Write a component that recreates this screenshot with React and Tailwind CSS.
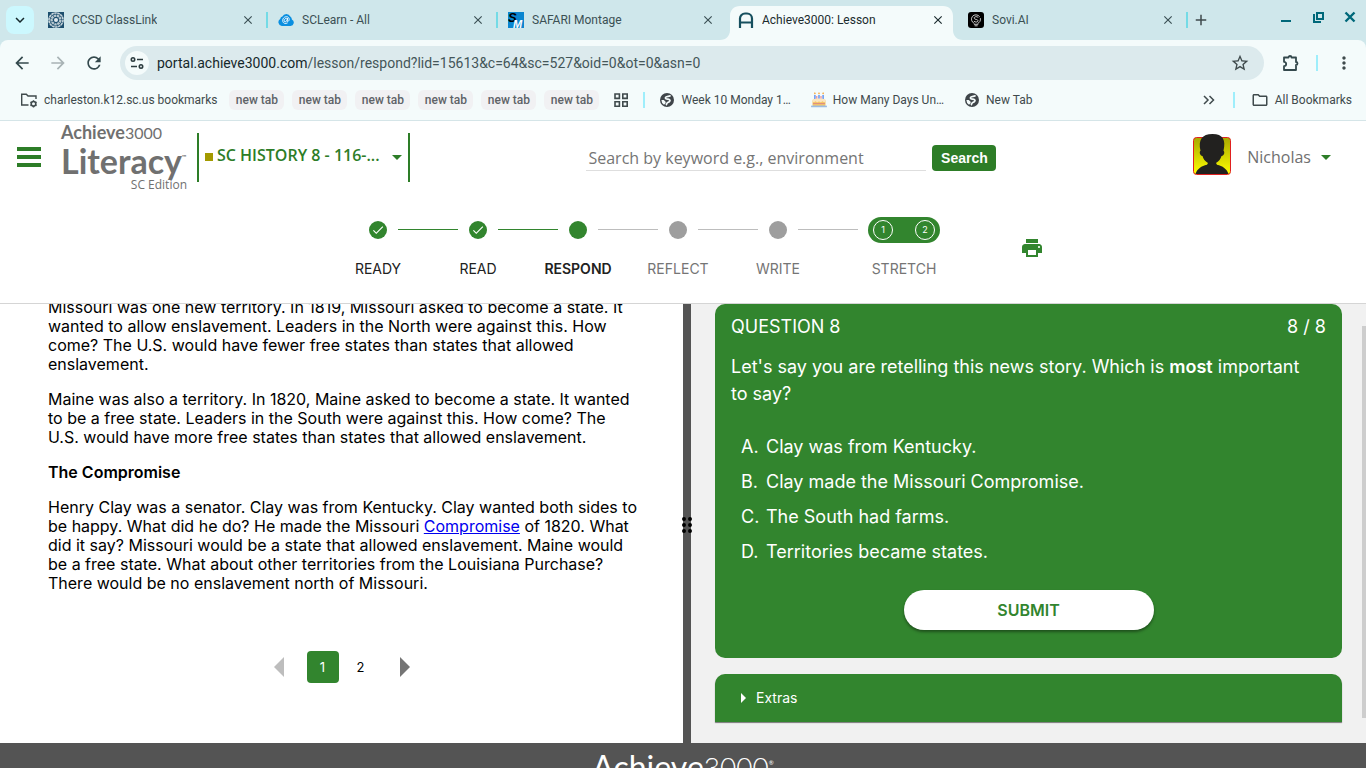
import { MdAdd, MdArrowBack, MdArrowForward, MdCheck, MdClose, MdExpandMore, MdMoreVert, MdOutlineFolder, MdPrint, MdRefresh, MdStarBorder } from 'react-icons/md';

const tabs = [
  { title: 'CCSD ClassLink', icon: <ClassLinkIcon />, divider: true },
  { title: 'SCLearn - All', icon: <CloudIcon />, divider: true },
  { title: 'SAFARI Montage', icon: <SafariIcon /> },
  { title: 'Achieve3000: Lesson', icon: <AchieveIcon />, active: true },
  { title: 'Sovi.AI', icon: <SoviIcon />, divider: true },
];

const steps = [
  { label: 'READY', state: 'done' },
  { label: 'READ', state: 'done' },
  { label: 'RESPOND', state: 'current' },
  { label: 'REFLECT', state: 'todo' },
  { label: 'WRITE', state: 'todo' },
];

const answers = [
  { letter: 'A', text: 'Clay was from Kentucky.' },
  { letter: 'B', text: 'Clay made the Missouri Compromise.' },
  { letter: 'C', text: 'The South had farms.' },
  { letter: 'D', text: 'Territories became states.' },
];

function ClassLinkIcon() {
  return (
    <svg className="h-4 w-4" viewBox="0 0 16 16" fill="none">
      <rect width="16" height="16" fill="#1d4f6e" />
      <circle cx="8" cy="8" r="7" stroke="#c9d6dc" strokeWidth="1.600" strokeDasharray="2.600 0.500" />
      <circle cx="8" cy="8" r="4.400" stroke="#b9c9d0" strokeWidth="2.400" strokeDasharray="2.400 0.600" />
      <circle cx="8" cy="8" r="2" fill="#dfe8ec" />
    </svg>
  );
}

function CloudIcon() {
  return (
    <svg className="h-4 w-4" viewBox="0 0 16 16" fill="none">
      <path d="M3.800 14A3.800 3.800 0 0 1 2.200 7a3 3 0 0 1 2.200-2.400A4.300 4.300 0 0 1 12.300 4.600a3.500 3.500 0 0 1 1.600 2.800A3.500 3.500 0 0 1 12.500 14z" fill="#0a8fe0" />
      <path d="M9.600 6.500c-1.800-.8-3.600.6-3.500 2.300.1 1.400 2.200 1 2.800-.3l.7-2-.6 2.600c.2 1 2.300.1 2.200-1.900C11 4.700 8.300 4 6.300 5.400 4 7 4.200 10.500 6.500 11.300c1 .3 2 .1 2.800-.3" stroke="#fff" strokeWidth="0.900" strokeLinecap="round" />
    </svg>
  );
}

function SafariIcon() {
  return (
    <svg className="h-4 w-4" viewBox="0 0 16 16">
      <rect width="16" height="16" fill="#0b86d0" />
      <text x="0" y="10" fontSize="13" fontWeight="900" fontStyle="italic" fontFamily="Liberation Sans, sans-serif" fill="#000">S</text>
      <text x="5" y="15.500" fontSize="11" fontWeight="700" fontStyle="italic" fontFamily="Liberation Sans, sans-serif" fill="#fff">M</text>
    </svg>
  );
}

function AchieveIcon() {
  return (
    <svg className="h-4 w-4" viewBox="0 0 16 16" fill="none" stroke="#17505f" strokeWidth="2.200">
      <path d="M2 16V6.500A5 5 0 0 1 7 1.500h2a5 5 0 0 1 5 5V16M2 10.500h12" />
    </svg>
  );
}

function SoviIcon() {
  return (
    <svg className="h-4 w-4" viewBox="0 0 16 16" fill="none">
      <rect width="16" height="16" rx="3" fill="#000" />
      <path d="M11.500 4.500A4.500 4.500 0 1 0 6 11.300M10 5.200C8 3.800 5.700 5 6.300 6.500c.5 1.200 3.500.6 3.700 2.200.1 1.500-2.600 1.800-3.800.8M12.400 6.500c.4 2.300-.7 4-2.400 4.800M6.300 12.300h3.600M7 13.800h2.200" stroke="#ddd" strokeWidth="0.900" strokeLinecap="round" />
    </svg>
  );
}

function GlobeIcon() {
  return (
    <svg className="h-4 w-4" viewBox="0 0 16 16" fill="none">
      <circle cx="8" cy="8" r="7" fill="#3f4549" />
      <path d="M11.500 3.300c-.7 1.400-4.500.6-5 2.300-.4 1.700 2.700 1.200 4 2 1.300 1-.2 2.500-1.500 2.700-1.500.3-1 1.800-2 2.800" stroke="#f4fbfb" strokeWidth="1.700" />
      <path d="M2.400 8h2.400l1.800 1.800v1.400L5 12.800A5.600 5.600 0 0 1 2.400 8z" fill="#f4fbfb" />
    </svg>
  );
}

function CakeIcon() {
  return (
    <svg className="h-4 w-4" viewBox="0 0 16 16">
      <path d="M3.200 3h1.400v5H3.200zM7.300 3h1.400v5H7.300zM11.400 3h1.400v5h-1.400z" fill="#5b8def" />
      <path d="M5.300 4h1v4h-1zM9.500 4h1v4h-1z" fill="#e9777c" />
      <path d="M3.900 0l.8 1.600-.8 1-.8-1zM8 0l.8 1.600-.8 1-.8-1zM12.100 0l.8 1.600-.8 1-.8-1z" fill="#f79b1e" />
      <rect x="1.500" y="7.200" width="13" height="7" rx="1.500" fill="#f5c667" />
      <path d="M1.500 9.300V8c0-2 13-2 13 0v1.300c-1.200 1.300-2 .9-3.200 0-1.200 1.300-2.100 1.200-3.300 0-1.200 1.200-2.100 1.300-3.300 0-1.200.9-2 1.300-3.200 0z" fill="#fbe6c0" />
      <path d="M2 11.600h12" stroke="#de8b83" strokeWidth="1" />
      <rect x="0" y="13.500" width="16" height="1.800" rx="0.900" fill="#9dbbe0" />
    </svg>
  );
}

function ManagedFolderIcon() {
  return (
    <svg className="h-[18px] w-[18px] shrink-0" viewBox="0 0 18 18" fill="none" stroke="#3f4a4c" strokeWidth="1.400">
      <path d="M8.500 14H1.700V3.200h4.600L8 5h8v3" />
      <circle cx="13.500" cy="12.800" r="2.300" strokeWidth="1.600" />
      <path d="M13.500 9.200v7.200M10.400 11l6.200 3.600M16.600 11l-6.200 3.600" strokeDasharray="1.300 4.600" />
    </svg>
  );
}

function Tab({ title, icon, active, divider }) {
  return (
    <div className={`relative flex h-10 w-[230px] min-w-0 items-center pr-5 pl-2.5 text-xs ${active ? 'text-[#1b2b2e]' : 'text-[#3b5054]'}`}>
      {active && (
        <svg className="absolute top-1.5 -left-2 h-[34px] w-[243px]" viewBox="0 0 243 34" fill="#f4fbfb">
          <path d="M0 34c6 0 10-4 10-10V10C10 4 14 0 20 0h203c6 0 10 4 10 10v14c0 6 4 10 10 10z" />
        </svg>
      )}
      <a href="#" className="relative flex min-w-0 flex-1 items-center gap-2">
        <span className="shrink-0">{icon}</span>
        <span className="truncate">{title}</span>
      </a>
      <button aria-label={`Close ${title}`} className="relative -mr-2 flex w-4 justify-center">
        <MdClose className="h-3.5 w-3.5" />
      </button>
      {divider && <span className="absolute right-0 h-4 w-0.5 bg-[#74dbe6]" />}
    </div>
  );
}

function BrowserChrome() {
  return (
    <div className="shrink-0 bg-[#cfe7eb] font-['Roboto',sans-serif] text-[#3f4a4c]">
      <div className="flex h-10 items-center pl-1.5">
        <button aria-label="Search tabs" className="mr-1 flex h-7 w-7 shrink-0 items-center justify-center rounded-lg bg-[#ccf8fe] text-[#16292c]">
          <MdExpandMore className="h-[18px] w-[18px]" />
        </button>
        {tabs.map((tab) => (
          <Tab key={tab.title} {...tab} />
        ))}
        <button aria-label="New tab" className="ml-1">
          <MdAdd className="h-[18px] w-[18px]" />
        </button>
        <div className="mr-2 mb-1.5 ml-auto flex items-center gap-4 text-[#00687a]">
          <button aria-label="Minimize">
            <svg className="h-4 w-4" viewBox="0 0 16 16"><path d="M3 11h10v2H3z" fill="currentColor" /></svg>
          </button>
          <button aria-label="Restore">
            <svg className="h-4 w-4" viewBox="0 0 16 16" fill="none" stroke="currentColor" strokeWidth="2">
              <path d="M7 4h6v6H7zM4 5v8h7" />
            </svg>
          </button>
          <button aria-label="Close window">
            <svg className="h-4 w-4" viewBox="0 0 16 16" fill="none" stroke="currentColor" strokeWidth="2.400"><path d="M3.500 3.500l9 9M12.500 3.500l-9 9" /></svg>
          </button>
        </div>
      </div>

      <div className="rounded-t-lg border-b border-[#d5e5e8] bg-[#f4fbfb]">
        <div className="flex h-[46px] items-center px-3">
          <button aria-label="Back" className="mr-4 text-[#34494d]"><MdArrowBack className="h-5 w-5" /></button>
          <button aria-label="Forward" className="mr-4 text-[#a8b3b5]"><MdArrowForward className="h-5 w-5" /></button>
          <button aria-label="Reload" className="mr-4 text-[#34494d]"><MdRefresh className="h-5 w-5" /></button>
          <div className="flex h-[34px] flex-1 items-center rounded-full bg-[#dceaed] pr-3.5 pl-[5px]">
            <button aria-label="Site information" className="flex h-6 w-6 items-center justify-center rounded-full bg-[#f4fbfb]">
              <svg className="h-3.5 w-3.5" viewBox="0 0 14 14" fill="none" stroke="#2b3b3e" strokeWidth="1.600">
                <circle cx="3" cy="3.500" r="1.700" />
                <path d="M7 3.500h6M1 10.500h6" />
                <circle cx="11" cy="10.500" r="1.700" />
              </svg>
            </button>
            <a href="#" className="ml-2 flex-1 text-sm text-[#445659]">
              <span className="text-[#15282b]">portal.achieve3000.com</span>/lesson/respond?lid=15613&amp;c=64&amp;sc=527&amp;oid=0&amp;ot=0&amp;asn=0
            </a>
            <button aria-label="Bookmark this page"><MdStarBorder className="h-5 w-5" /></button>
          </div>
          <button aria-label="Extensions" className="ml-4 text-[#34494d]">
            <svg className="h-5 w-5" viewBox="0 0 20 20" fill="none" stroke="currentColor" strokeWidth="1.800" strokeLinejoin="round">
              <path d="M4 4.500h4.500a1.500 1.500 0 0 1 3 0H16v4.500a1.500 1.500 0 0 1 0 3V17H4v-3.800c2.900-.2 2.900-4.200 0-4.400z" />
            </svg>
          </button>
          <span className="mx-4 h-4 w-0.5 bg-[#9eeefb]" />
          <button aria-label="Browser menu"><MdMoreVert className="h-5 w-5" /></button>
        </div>

        <div className="flex h-[34px] items-center pr-3.5 pb-1.5 pl-5 text-xs">
          <a href="#" className="flex items-center gap-1.5"><ManagedFolderIcon />charleston.k12.sc.us bookmarks</a>
          <div className="ml-3 flex gap-2">
            {[1, 2, 3, 4, 5, 6].map((n) => (
              <a key={n} href="#" className="w-[55px] rounded-md bg-[#f1f1f3] text-center leading-5 font-medium text-[#5f6368]">new tab</a>
            ))}
          </div>
          <button aria-label="Tab groups" className="ml-3.5">
            <svg className="h-4 w-4" viewBox="0 0 16 16" fill="none" stroke="currentColor" strokeWidth="1.600">
              <path d="M2 2h4.400v4.400H2zM9.800 2h4.400v4.400H9.800zM2 9.800h4.400v4.400H2zM9.800 9.800h4.400v4.400H9.800z" />
            </svg>
          </button>
          <span className="mx-3.5 h-4 w-0.5 bg-[#9eeefb]" />
          <a href="#" className="flex items-center gap-1.5"><GlobeIcon />Week 10 Monday 1…</a>
          <a href="#" className="ml-5 flex items-center gap-1.5"><CakeIcon />How Many Days Un…</a>
          <a href="#" className="ml-5 flex items-center gap-1.5"><GlobeIcon />New Tab</a>
          <button aria-label="More bookmarks" className="ml-auto">
            <svg className="h-4 w-4" viewBox="0 0 16 16" fill="none" stroke="currentColor" strokeWidth="1.500"><path d="M3 4l4 4-4 4M8.500 4l4 4-4 4" /></svg>
          </button>
          <span className="mx-4 h-4 w-0.5 bg-[#9eeefb]" />
          <a href="#" className="flex items-center gap-1.5"><MdOutlineFolder className="h-[18px] w-[18px]" />All Bookmarks</a>
        </div>
      </div>
    </div>
  );
}

function Header() {
  return (
    <header className="flex h-[72px] shrink-0 items-center pr-[35px] pl-[17px] font-['Open_Sans',sans-serif]">
      <button aria-label="Menu" className="flex w-6 flex-col gap-1">
        <span className="h-1 bg-[#2d7d27]" />
        <span className="h-1 bg-[#2d7d27]" />
        <span className="h-1 bg-[#2d7d27]" />
      </button>
      <a href="#" className="ml-5 flex w-[126px] flex-col text-[#707070]">
        <span className="font-['Lato',sans-serif] text-lg leading-4 font-bold">
          Achieve<span className="text-base font-normal">3000</span>
        </span>
        <span className="flex font-['Lato',sans-serif] text-[34px] leading-8 font-bold">
          Literacy<span className="text-[6px] leading-6">™</span>
        </span>
        <span className="text-right text-xs leading-4 font-medium">SC Edition</span>
      </a>
      <button className="ml-2.5 flex h-[49px] items-center border-x-2 border-[#2d7d27] px-1.5 font-semibold text-[#2d7d27]">
        <span className="mr-1 h-2 w-2 bg-[#a39a00]" />
        <span className="pb-1">SC HISTORY 8 - 116-...</span>
        <svg className="ml-3 h-[5px] w-2.5" viewBox="0 0 10 5" fill="currentColor"><path d="M0 0h10L5 5z" /></svg>
      </button>
      <form className="mt-0.5 mr-5 ml-auto flex items-center gap-1.5">
        <input aria-label="Search" placeholder="Search by keyword e.g., environment" className="h-[26px] w-[340px] border-b border-[#dedede] px-0.5 text-base placeholder:text-[#757575]" />
        <button type="button" className="h-[26px] w-16 rounded bg-[#2d7d27] font-['Liberation_Sans',sans-serif] text-sm font-bold text-white">Search</button>
      </form>
      <button className="ml-auto flex items-center text-[#707070]">
        <svg className="mr-4 mb-1 h-[42px] w-[38px]" viewBox="0 0 38 42">
          <defs>
            <linearGradient id="avatar" x2="0" y2="1"><stop stopColor="#a8a800" /><stop offset="1" stopColor="#ffff00" /></linearGradient>
          </defs>
          <rect x="0.500" y="3.500" width="37" height="37" rx="3" fill="url(#avatar)" stroke="#e02020" />
          <path d="M2.500 40c1.500-5 6-8 11.500-9.200l1-1.800c-3-1.800-4.800-4-5.500-7-2.600 0-3.500-4.400-2-5.200C5 6 9 0 19.500 0S33 6 30.500 16.800c1.500.8.800 5.200-2 5.200-.8 3-2.500 5.200-5.500 7l1 1.800c5.500 1.200 10 4.200 11.500 9.200z" fill="#22211f" />
        </svg>
        Nicholas
        <svg className="ml-2.5 h-[5px] w-2.5" viewBox="0 0 10 5" fill="#2d7d27"><path d="M0 0h10L5 5z" /></svg>
      </button>
    </header>
  );
}

function Step({ label, state }) {
  return (
    <li className="flex items-start">
      <a href="#" className="flex w-10 flex-col items-center pt-1">
        <span className={`flex h-[18px] w-[18px] items-center justify-center rounded-full text-white ${state === 'todo' ? 'bg-[#9e9e9e]' : 'bg-[#32852e]'}`}>
          {state === 'done' && <MdCheck className="h-3.5 w-3.5" />}
        </span>
        <span className={`mt-5 text-sm ${state === 'todo' ? 'text-[#757575]' : 'text-[#212121]'} ${state === 'current' ? 'font-semibold' : ''}`}>{label}</span>
      </a>
      <span className={`mt-3 h-px w-[60px] ${state === 'done' ? 'bg-[#32852e]' : 'bg-[#bdbdbd]'}`} />
    </li>
  );
}

function Stepper() {
  return (
    <nav className="flex h-[111px] shrink-0 items-start justify-center border-b border-[#d5d5d5] pt-6 pl-9 font-['Inter',sans-serif]">
      <ol className="flex items-start">
        {steps.map((step) => (
          <Step key={step.label} {...step} />
        ))}
        <li className="flex w-[92px] flex-col items-center">
          <div className="flex h-[26px] w-[72px] items-center justify-between rounded-full bg-[#32852e] px-[5px] text-[9px] text-white">
            <a href="#" className="flex h-5 w-5 items-center justify-center rounded-full border border-white">1</a>
            <a href="#" className="flex h-5 w-5 items-center justify-center rounded-full border border-white">2</a>
          </div>
          <span className="mt-4 text-sm text-[#757575]">STRETCH</span>
        </li>
      </ol>
      <button aria-label="Print" className="mt-[19px] ml-[70px] text-[#32852e]"><MdPrint className="h-6 w-6" /></button>
    </nav>
  );
}

function Article() {
  return (
    <article className="w-1/2 shrink-0 overflow-hidden px-11 leading-[19px] text-black">
      <div className="-mt-1.5 space-y-4 pl-1">
        <p>Missouri was one new territory. In 1819, Missouri asked to become a state. It wanted to allow enslavement. Leaders in the North were against this. How come? The U.S. would have fewer free states than states that allowed enslavement.</p>
        <p>Maine was also a territory. In 1820, Maine asked to become a state. It wanted to be a free state. Leaders in the South were against this. How come? The U.S. would have more free states than states that allowed enslavement.</p>
        <h2 className="font-semibold">The Compromise</h2>
        <p>Henry Clay was a senator. Clay was from Kentucky. Clay wanted both sides to be happy. What did he do? He made the Missouri <a href="#" className="text-[#0000ee] underline">Compromise</a> of 1820. What did it say? Missouri would be a state that allowed enslavement. Maine would be a free state. What about other territories from the Louisiana Purchase? There would be no enslavement north of Missouri.</p>
      </div>
      <div className="mt-[58px] flex justify-center gap-3 text-[13px]">
        <button aria-label="Previous page" className="flex h-8 w-8 items-center justify-center">
          <svg className="h-5 w-2.5" viewBox="0 0 10 20" fill="#bdbdbd"><path d="M10 0v20L0 10z" /></svg>
        </button>
        <div className="flex gap-1.5">
          <button className="h-8 w-8 rounded bg-[#32852e] text-white">1</button>
          <button className="h-8 w-8 rounded">2</button>
        </div>
        <button aria-label="Next page" className="flex h-8 w-8 items-center justify-center">
          <svg className="h-5 w-2.5" viewBox="0 0 10 20" fill="#757575"><path d="M0 0v20l10-10z" /></svg>
        </button>
      </div>
    </article>
  );
}

function Question() {
  return (
    <section className="relative min-w-0 flex-1 overflow-hidden bg-[#f1f1f1] px-6 text-white">
      <div className="rounded-[10px] bg-[#32852e] px-4 pt-[13px] pb-7 text-lg">
        <div className="flex justify-between leading-5">
          <h2>QUESTION 8</h2>
          <span>8 / 8</span>
        </div>
        <p className="mt-4 pr-4 leading-[27px]">Let's say you are retelling this news story. Which is <b className="font-semibold">most</b> important to say?</p>
        <ol className="mt-[22px] pl-2.5">
          {answers.map(({ letter, text }) => (
            <li key={letter}>
              <button className="flex leading-[35px]"><span className="w-[25px] text-left">{letter}.</span>{text}</button>
            </li>
          ))}
        </ol>
        <button className="mx-auto mt-[21px] block h-10 w-[250px] rounded-full bg-white text-base font-semibold text-[#32852e] shadow-[0_2px_3px_rgba(0,0,0,0.4)]">SUBMIT</button>
      </div>
      <button className="mt-4 flex h-12 w-full items-center gap-2.5 rounded-t-[10px] bg-[#32852e] pl-[26px] text-sm shadow-[0_1px_1px_rgba(0,0,0,0.5)]">
        <svg className="h-2.5 w-[5px]" viewBox="0 0 5 10" fill="currentColor"><path d="M0 0v10l5-5z" /></svg>
        Extras
      </button>
      <span className="absolute top-[22px] right-0 bottom-[25px] w-1 bg-[#cdcdcd]" />
    </section>
  );
}

export default function App() {
  return (
    <div className="flex h-screen flex-col overflow-hidden bg-white">
      <BrowserChrome />
      <Header />
      <Stepper />
      <main className="flex min-h-0 flex-1 font-['Inter',sans-serif]">
        <Article />
        <div className="z-10 flex w-2 shrink-0 items-center justify-center bg-[#545454] pt-0.5">
          <svg className="h-4 w-2.5 shrink-0" viewBox="0 0 10 16">
            <path d="M2 2h0M8 2h0M2 8h0M8 8h0M2 14h0M8 14h0" stroke="#000" strokeWidth="4" strokeLinecap="round" />
          </svg>
        </div>
        <Question />
      </main>
      <footer className="flex h-[25px] shrink-0 items-start justify-center overflow-hidden bg-[#545454] pt-2 font-['Lato',sans-serif] text-[32px] leading-8 text-white">
        Achieve<span className="text-[28px] font-light">3000</span><span className="text-[6px] leading-6">®</span>
      </footer>
    </div>
  );
}
